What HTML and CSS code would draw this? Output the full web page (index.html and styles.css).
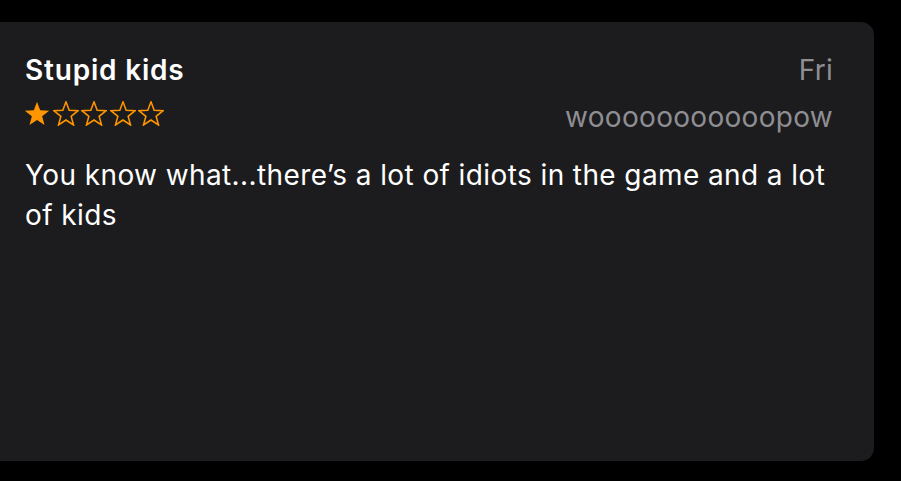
FILE: index.html
```html
<!DOCTYPE html>
<html>
<head>
<meta charset="utf-8">
<link rel="stylesheet" href="styles.css">
</head>
<body>
<div class="card">
  <div class="head">
    <div class="left">
      <div class="title">Stupid kids</div>
      <div class="stars">
        <svg class="star" viewBox="-0.8 -0.8 25.6 24.6"><path class="fill" d="M12 0L15.12 8.33 24 8.72 17.04 14.26 19.42 22.83 12 17.92 4.58 22.83 6.96 14.26 0 8.72 8.88 8.33Z"/></svg>
        <svg class="star" viewBox="-0.8 -0.8 25.6 24.6"><path class="line" d="M12 0L15.12 8.33 24 8.72 17.04 14.26 19.42 22.83 12 17.92 4.58 22.83 6.96 14.26 0 8.72 8.88 8.33Z"/></svg>
        <svg class="star" viewBox="-0.8 -0.8 25.6 24.6"><path class="line" d="M12 0L15.12 8.33 24 8.72 17.04 14.26 19.42 22.83 12 17.92 4.58 22.83 6.96 14.26 0 8.72 8.88 8.33Z"/></svg>
        <svg class="star" viewBox="-0.8 -0.8 25.6 24.6"><path class="line" d="M12 0L15.12 8.33 24 8.72 17.04 14.26 19.42 22.83 12 17.92 4.58 22.83 6.96 14.26 0 8.72 8.88 8.33Z"/></svg>
        <svg class="star" viewBox="-0.8 -0.8 25.6 24.6"><path class="line" d="M12 0L15.12 8.33 24 8.72 17.04 14.26 19.42 22.83 12 17.92 4.58 22.83 6.96 14.26 0 8.72 8.88 8.33Z"/></svg>
      </div>
    </div>
    <div class="right">
      <div class="date">Fri</div>
      <div class="author">wooooooooooopow</div>
    </div>
  </div>
  <p class="body">You know what...there’s a lot of idiots in the game and a lot of kids</p>
</div>
</body>
</html>
```
FILE: styles.css
```css
html, body {
  margin: 0;
  padding: 0;
  background: #000;
}
body {
  font-family: Inter, "Noto Sans", sans-serif;
  -webkit-font-smoothing: antialiased;
}
.card {
  margin-top: 22px;
  width: 874px;
  height: 439px;
  box-sizing: border-box;
  background: #1c1c1e;
  border-radius: 0 13px 13px 0;
  padding: 31px 41px 0 25px;
}
.head {
  display: flex;
  justify-content: space-between;
}
.title {
  color: #fff;
  font-size: 28px;
  font-weight: 600;
  line-height: 34px;
  letter-spacing: 0.8px;
}
.stars {
  display: flex;
  gap: 2.5px;
  margin-top: 14px;
  margin-left: -1px;
}
.star {
  width: 26px;
  height: 25px;
  display: block;
}
.fill { fill: #ff9500; }
.line { fill: none; stroke: #ff9500; stroke-width: 1.5; stroke-linejoin: miter; }
.right {
  text-align: right;
  color: #8e8e93;
  font-size: 28px;
  line-height: 34px;
  letter-spacing: 0.3px;
}
.author { margin-top: 13px; }
.body {
  margin: 21px 0 0 0;
  color: #fff;
  font-size: 28px;
  line-height: 40px;
  letter-spacing: 0.4px;
}
```
